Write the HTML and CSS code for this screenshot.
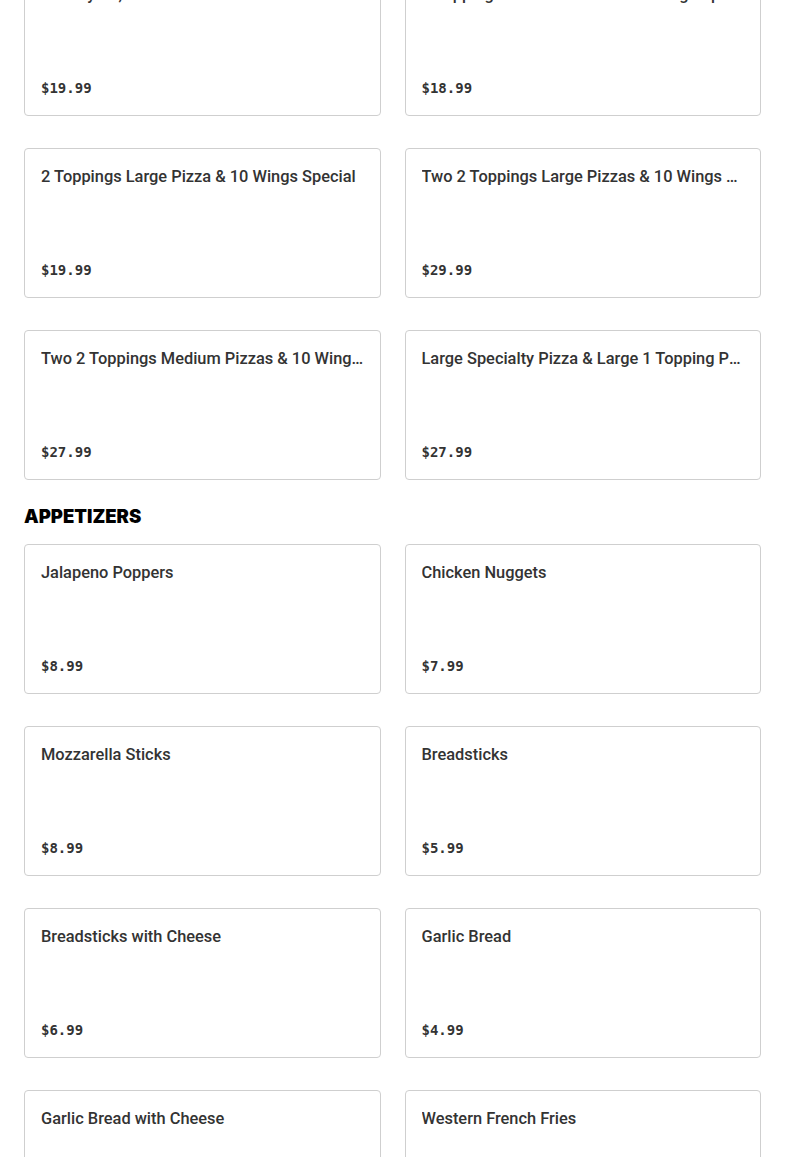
FILE: index.html
```html
<!DOCTYPE html>
<html lang="en">

<head>
  <meta charset="UTF-8">
  <meta name="viewport" content="width=device-width, initial-scale=1.0">
  <title>Menu</title>
  <link rel="stylesheet" href="styles.css">
</head>

<body>
  <div class="menu">
    <!-- Specials (page is scrolled, first row is cut at the top) -->
    <div class="grid grid-scrolled">
      <div class="card">
        <div class="card-title">Two Gyros, 2 French Fries &amp; Two 12 oz. Cans of Soda</div>
        <div class="card-price">$19.99</div>
      </div>
      <div class="card">
        <div class="card-title">2 Toppings Medium Pizza &amp; 10 Wings Special</div>
        <div class="card-price">$18.99</div>
      </div>
      <div class="card">
        <div class="card-title">2 Toppings Large Pizza &amp; 10 Wings Special</div>
        <div class="card-price">$19.99</div>
      </div>
      <div class="card">
        <div class="card-title">Two 2 Toppings Large Pizzas &amp; 10 Wings Special</div>
        <div class="card-price">$29.99</div>
      </div>
      <div class="card">
        <div class="card-title">Two 2 Toppings Medium Pizzas &amp; 10 Wings Special</div>
        <div class="card-price">$27.99</div>
      </div>
      <div class="card">
        <div class="card-title">Large Specialty Pizza &amp; Large 1 Topping Pizza</div>
        <div class="card-price">$27.99</div>
      </div>
    </div>

    <h2 class="section-title">Appetizers</h2>
    <div class="grid">
      <div class="card">
        <div class="card-title">Jalapeno Poppers</div>
        <div class="card-price">$8.99</div>
      </div>
      <div class="card">
        <div class="card-title">Chicken Nuggets</div>
        <div class="card-price">$7.99</div>
      </div>
      <div class="card">
        <div class="card-title">Mozzarella Sticks</div>
        <div class="card-price">$8.99</div>
      </div>
      <div class="card">
        <div class="card-title">Breadsticks</div>
        <div class="card-price">$5.99</div>
      </div>
      <div class="card">
        <div class="card-title">Breadsticks with Cheese</div>
        <div class="card-price">$6.99</div>
      </div>
      <div class="card">
        <div class="card-title">Garlic Bread</div>
        <div class="card-price">$4.99</div>
      </div>
      <div class="card">
        <div class="card-title">Garlic Bread with Cheese</div>
        <div class="card-price">$5.99</div>
      </div>
      <div class="card">
        <div class="card-title">Western French Fries</div>
        <div class="card-price">$4.99</div>
      </div>
    </div>
  </div>
</body>

</html>
```

FILE: styles.css
```css
body {
  margin: 0;
  font-family: Roboto, "Noto Sans", sans-serif;
  background-color: #fff;
  color: #2b2b2b;
  overflow: hidden;
}

.menu {
  padding: 0 24px;
}

.grid {
  display: grid;
  grid-template-columns: 1fr 1fr;
  gap: 32px 24px;
}

/* the screenshot is scrolled down a bit */
.grid-scrolled {
  margin-top: -34px;
}

.card {
  display: flex;
  flex-direction: column;
  justify-content: space-between;
  height: 150px;
  padding: 16px 16px 17px;
  border: 1px solid #cfcfcf;
  border-radius: 4px;
  box-sizing: border-box;
  min-width: 0;
}

.card-title {
  font-size: 16.4px;
  font-weight: 500;
  line-height: 23px;
  color: #333;
  white-space: nowrap;
  overflow: hidden;
  text-overflow: ellipsis;
}

.card-price {
  font-family: "DejaVu Sans Mono", "Liberation Mono", monospace;
  font-size: 14px;
  font-weight: 600;
  line-height: 20px;
  color: #333;
}

.section-title {
  margin: 24px 0 16px;
  font-family: Inter, Roboto, sans-serif;
  font-size: 18.5px;
  font-weight: 900;
  line-height: 24px;
  text-transform: uppercase;
  color: #000;
}
```
